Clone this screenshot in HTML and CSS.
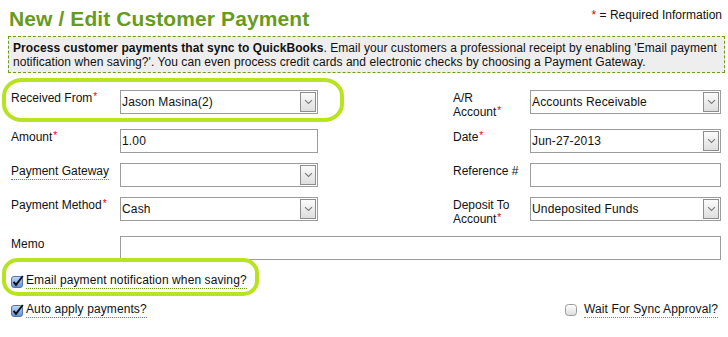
FILE: index.html
```html
<!DOCTYPE html>
<html>
<head>
<meta charset="utf-8">
<link rel="stylesheet" href="styles.css">
</head>
<body>
<div class="page">
  <div class="header">
    <h1 class="title">New / Edit Customer Payment</h1>
    <div class="required"><span class="star">*</span> = Required Information</div>
  </div>
  <div class="info">
    <b>Process customer payments that sync to QuickBooks</b>. Email your customers a professional receipt by enabling 'Email payment<br>notification when saving?'. You can even process credit cards and electronic checks by choosing a Payment Gateway.
  </div>

  <div class="form">
    <div class="label c1">Received From<span class="req">*</span></div>
    <div class="field select c2"><span class="val">Jason Masina(2)</span><span class="arrow"><svg width="9" height="6" viewBox="0 0 9 6"><path d="M1 1.2 L4.5 4.5 L8 1.2" fill="none" stroke="#7a7a7a" stroke-width="1.1"/></svg></span></div>
    <div class="label c4">A/R<br>Account<span class="req">*</span></div>
    <div class="field select c5"><span class="val">Accounts Receivable</span><span class="arrow"><svg width="9" height="6" viewBox="0 0 9 6"><path d="M1 1.2 L4.5 4.5 L8 1.2" fill="none" stroke="#7a7a7a" stroke-width="1.1"/></svg></span></div>

    <div class="label c1">Amount<span class="req">*</span></div>
    <div class="field c2"><span class="val">1.00</span></div>
    <div class="label c4">Date<span class="req">*</span></div>
    <div class="field select c5"><span class="val">Jun-27-2013</span><span class="arrow"><svg width="9" height="6" viewBox="0 0 9 6"><path d="M1 1.2 L4.5 4.5 L8 1.2" fill="none" stroke="#7a7a7a" stroke-width="1.1"/></svg></span></div>

    <div class="label c1"><span class="dotted">Payment Gateway</span></div>
    <div class="field select c2"><span class="val"></span><span class="arrow"><svg width="9" height="6" viewBox="0 0 9 6"><path d="M1 1.2 L4.5 4.5 L8 1.2" fill="none" stroke="#7a7a7a" stroke-width="1.1"/></svg></span></div>
    <div class="label c4">Reference #</div>
    <div class="field c5"><span class="val"></span></div>

    <div class="label c1">Payment Method<span class="req">*</span></div>
    <div class="field select c2"><span class="val">Cash</span><span class="arrow"><svg width="9" height="6" viewBox="0 0 9 6"><path d="M1 1.2 L4.5 4.5 L8 1.2" fill="none" stroke="#7a7a7a" stroke-width="1.1"/></svg></span></div>
    <div class="label c4">Deposit To<br>Account<span class="req">*</span></div>
    <div class="field select c5"><span class="val">Undeposited Funds</span><span class="arrow"><svg width="9" height="6" viewBox="0 0 9 6"><path d="M1 1.2 L4.5 4.5 L8 1.2" fill="none" stroke="#7a7a7a" stroke-width="1.1"/></svg></span></div>

    <div class="label c1">Memo</div>
    <div class="field memo"><span class="val"></span></div>
  </div>

  <div class="checks">
    <div class="check-row">
      <label class="check"><span class="box"><svg width="13" height="13" viewBox="0 0 13 13"><defs><linearGradient id="g1" x1="0" y1="0" x2="0" y2="1"><stop offset="0" stop-color="#c6dcf7"/><stop offset="1" stop-color="#5b8fdc"/></linearGradient></defs><rect x="0.5" y="1.5" width="11" height="11" rx="2.5" fill="url(#g1)" stroke="#5a73a5"/><path d="M2.6 6.8 L5 9.8 L11.8 1" fill="none" stroke="#111" stroke-width="2"/></svg></span><span class="dotted">Email payment notification when saving?</span></label>
    </div>
    <div class="check-row split">
      <label class="check"><span class="box"><svg width="13" height="13" viewBox="0 0 13 13"><defs><linearGradient id="g2" x1="0" y1="0" x2="0" y2="1"><stop offset="0" stop-color="#c6dcf7"/><stop offset="1" stop-color="#5b8fdc"/></linearGradient></defs><rect x="0.5" y="1.5" width="11" height="11" rx="2.5" fill="url(#g2)" stroke="#5a73a5"/><path d="M2.6 6.8 L5 9.8 L11.8 1" fill="none" stroke="#111" stroke-width="2"/></svg></span><span class="dotted">Auto apply payments?</span></label>
      <label class="check wait"><span class="box"><svg width="13" height="13" viewBox="0 0 13 13"><defs><linearGradient id="g3" x1="0" y1="0" x2="0" y2="1"><stop offset="0" stop-color="#ffffff"/><stop offset="1" stop-color="#dcdcdc"/></linearGradient></defs><rect x="0.5" y="0.5" width="11" height="11" rx="3" fill="url(#g3)" stroke="#9a9a9a"/></svg></span><span class="dotted">Wait For Sync Approval?</span></label>
    </div>
  </div>

  <div class="hl hl1"></div>
  <div class="hl hl2"></div>
</div>
</body>
</html>
```

FILE: styles.css
```css
html, body {
  margin: 0;
  padding: 0;
  background: #fff;
}
body {
  font-family: "Liberation Sans", Arial, sans-serif;
  font-size: 12px;
  color: #111;
}
.page {
  position: relative;
  width: 728px;
  height: 337px;
  overflow: hidden;
}
.header {
  display: flex;
  justify-content: space-between;
  align-items: flex-start;
  padding: 7px 6px 0 9px;
  height: 24px;
}
.title {
  margin: 0;
  font-size: 21px;
  line-height: 24px;
  font-weight: bold;
  color: #679b1b;
  letter-spacing: 0.1px;
}
.required {
  margin-top: 1px;
  line-height: 14px;
  font-size: 12px;
  color: #111;
}
.star {
  color: #e00000;
}
.info {
  margin: 5px 0 0 8px;
  width: 707px;
  border: 1px dashed #6c9d1a;
  background: #eeeeee;
  padding: 4px 4px 3px 4px;
  line-height: 14px;
  font-size: 12px;
  letter-spacing: 0.06px;
  color: #111;
  white-space: nowrap;
}
.form {
  display: grid;
  grid-template-columns: 109px 198px 135px 77px 191px;
  row-gap: 10px;
  align-items: start;
  margin: 17px 0 0 11px;
}
.c1 { grid-column: 1; }
.c2 { grid-column: 2; }
.c4 { grid-column: 4; }
.c5 { grid-column: 5; }
.memo { grid-column: 2 / 6; }
.label {
  line-height: 14px;
  padding-top: 1px;
  font-size: 12px;
  color: #111;
}
.req {
  color: #e00000;
  font-size: 10px;
  vertical-align: top;
  line-height: 12px;
  margin-left: 1px;
}
.dotted {
  border-bottom: 1px dotted #6f9a1a;
  padding-bottom: 1px;
}
.field {
  box-sizing: border-box;
  height: 24px;
  border: 1px solid #9c9c9c;
  background: #fff;
  display: flex;
  align-items: center;
  padding: 0 1px 0 1px;
  font-size: 12px;
  color: #111;
}
.field .val {
  flex: 1;
  line-height: 14px;
  letter-spacing: 0.15px;
}
.arrow {
  box-sizing: border-box;
  width: 16px;
  height: 20px;
  border: 1px solid #8d8d8d;
  background: linear-gradient(#fbfbfb, #dedede);
  display: flex;
  align-items: center;
  justify-content: center;
}
.arrow svg {
  display: block;
}
.checks {
  margin: 13px 0 0 11px;
  width: 710px;
  display: flex;
  flex-direction: column;
  row-gap: 13px;
}
.check-row {
  display: flex;
}
.check-row.split {
  justify-content: space-between;
}
.check {
  display: flex;
  align-items: center;
  line-height: 14px;
  font-size: 12px;
  color: #111;
  letter-spacing: 0.1px;
}
.check .box {
  display: flex;
  width: 13px;
  height: 13px;
  margin-right: 2px;
}
.check.wait {
  margin-right: 3px;
  margin-top: -1px;
}
.check.wait .box {
  margin-right: 6px;
  margin-top: 1px;
}
.hl {
  position: absolute;
  box-sizing: border-box;
  border: 4px solid #b7e41e;
  pointer-events: none;
}
.hl1 {
  left: 2px;
  top: 78px;
  width: 342px;
  height: 44px;
  border-radius: 20px / 18px;
}
.hl2 {
  left: 2px;
  top: 258px;
  width: 257px;
  height: 38px;
  border-radius: 16px / 15px;
}
```
